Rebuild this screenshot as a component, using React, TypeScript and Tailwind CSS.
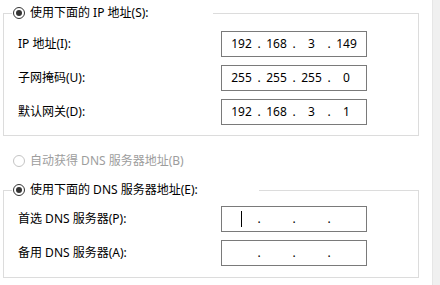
import React from 'react';

// IPv4 field: four segments separated by fixed dots, like the Win32 control
function IpField({ parts, caret }: { parts: string[]; caret?: boolean }) {
  return (
    <div className="flex h-[26px] w-[146px] items-center border border-[#7a7a7a] bg-white pl-[4px] text-[12px] text-black">
      {parts.map((p, i) => (
        <React.Fragment key={i}>
          {i > 0 && <span className="w-[4px] text-center leading-none">.</span>}
          <span className="relative flex w-[31px] justify-center leading-none">
            {caret && i === 0 && (
              <span className="absolute left-[15px] top-[-8px] h-[16px] w-[1px] bg-black" />
            )}
            {p}
          </span>
        </React.Fragment>
      ))}
    </div>
  );
}

function Radio({ checked, disabled }: { checked?: boolean; disabled?: boolean }) {
  return (
    <span
      className={`flex h-[12px] w-[12px] shrink-0 items-center justify-center rounded-full border bg-white ${
        disabled ? 'border-[#c4c4c4]' : 'border-[#333333]'
      }`}
    >
      {checked && <span className="h-[6px] w-[6px] rounded-full bg-[#333333]" />}
    </span>
  );
}

function Row({ label, parts, caret }: { label: string; parts: string[]; caret?: boolean }) {
  return (
    <div className="flex items-center pl-[14px]">
      <span className="w-[203px] text-[12px] leading-[20px]">{label}</span>
      <IpField parts={parts} caret={caret} />
    </div>
  );
}

function Group({
  title,
  legendWidth,
  className,
  children,
}: {
  title: string;
  legendWidth: string;
  className: string;
  children: React.ReactNode;
}) {
  return (
    <fieldset className={`w-[416px] border border-[#dcdcdc] ${className}`}>
      <legend className={`ml-[8px] flex h-[20px] items-center bg-white ${legendWidth}`}>
        <span className="ml-[1px]">
          <Radio checked />
        </span>
        <span className="ml-[5px] text-[12px] leading-[20px]">{title}</span>
      </legend>
      <div className="flex flex-col gap-[8px]">{children}</div>
    </fieldset>
  );
}

export default function App() {
  return (
    <div
      className="flex h-[285px] w-[440px] overflow-hidden bg-white text-black"
      style={{ fontFamily: '"Noto Sans", "Noto Sans CJK SC", sans-serif' }}
    >
      <div className="w-[432px] pl-[3px]">
        <Group title="使用下面的 IP 地址(S):" legendWidth="w-[201px]" className="mt-[3px] pt-[8px] pb-[10px]">
          <Row label="IP 地址(I):" parts={['192', '168', '3', '149']} />
          <Row label="子网掩码(U):" parts={['255', '255', '255', '0']} />
          <Row label="默认网关(D):" parts={['192', '168', '3', '1']} />
        </Group>

        <div className="mt-[15px] flex h-[20px] items-center pl-[10px]">
          <Radio disabled />
          <span className="ml-[5px] text-[12px] leading-[20px] text-[#9d9d9d]">自动获得 DNS 服务器地址(B)</span>
        </div>

        <Group title="使用下面的 DNS 服务器地址(E):" legendWidth="w-[247px]" className="mt-[9px] pt-[6px] pb-[11px]">
          <Row label="首选 DNS 服务器(P):" parts={['', '', '', '']} caret />
          <Row label="备用 DNS 服务器(A):" parts={['', '', '', '']} />
        </Group>
      </div>
      <div className="w-[8px] border-l border-[#e6e6e6] bg-[#f0f0f0]" />
    </div>
  );
}
